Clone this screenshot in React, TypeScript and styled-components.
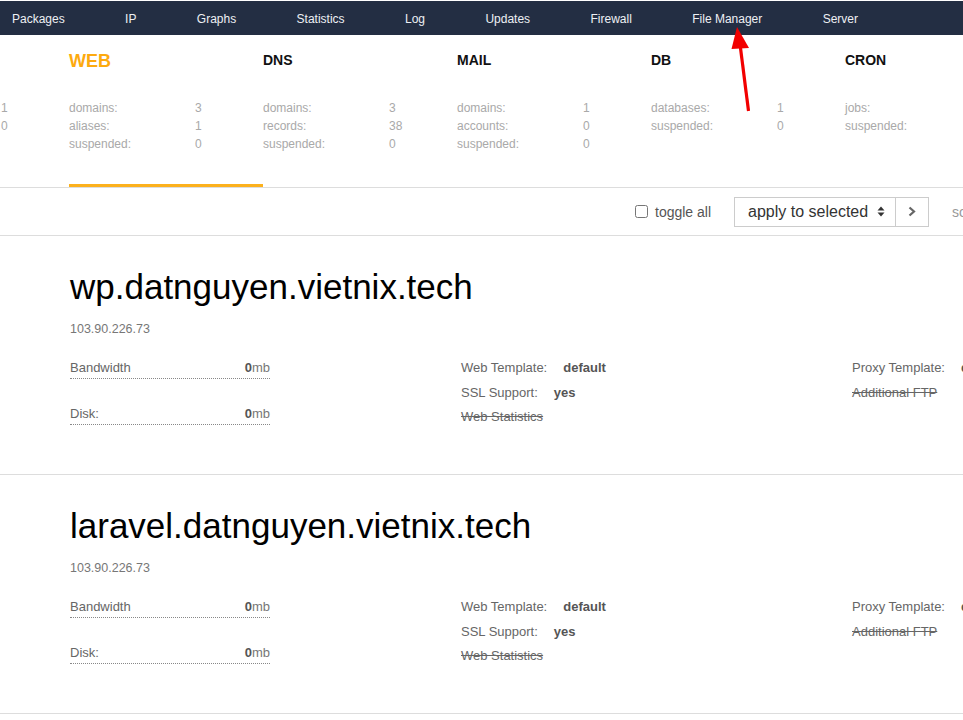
import React from "react";
import styled, { createGlobalStyle } from "styled-components";

const Global = createGlobalStyle`
  html, body { margin: 0; padding: 0; overflow: hidden; background: #fff; }
  body { font-family: "Liberation Sans", Arial, sans-serif; }
`;

const Page = styled.div`
  position: relative;
  width: 963px;
  overflow: hidden;
  padding-top: 1px;
`;

const NavBar = styled.nav`
  display: flex;
  align-items: center;
  gap: 60.4px;
  height: 34px;
  box-sizing: border-box;
  padding: 2px 0 0 12px;
  background: #232e43;
  white-space: nowrap;
`;

const NavItem = styled.span`
  flex: none;
  color: #eef0f4;
  font-size: 12px;
`;

const StatsRow = styled.div`
  display: flex;
  margin-left: -125px;
  border-bottom: 1px solid #dddddd;
  white-space: nowrap;
`;

const Tab = styled.div<{ $active?: boolean }>`
  flex: none;
  width: 194px;
  height: 152px;
  box-sizing: border-box;
  padding-top: 15px;
  border-bottom: 3px solid ${(p) => (p.$active ? "#fcb11d" : "transparent")};
`;

const TabTitle = styled.div<{ $active?: boolean }>`
  height: 22px;
  line-height: ${(p) => (p.$active ? "22px" : "20px")};
  font-weight: bold;
  font-size: ${(p) => (p.$active ? "18px" : "14px")};
  color: ${(p) => (p.$active ? "#fdaa0f" : "#111")};
`;

const StatList = styled.div`
  display: grid;
  grid-template-columns: 126px auto;
  margin-top: 27px;
  font-size: 12px;
  line-height: 18px;
  color: #a9a9a9;
`;

const Toolbar = styled.div`
  display: flex;
  align-items: center;
  height: 47px;
  padding-left: 635px;
  border-bottom: 1px solid #dddddd;
  white-space: nowrap;
  & > * { flex: none; }
`;

const Check = styled.input`
  width: 13px;
  height: 13px;
  margin: 0 7px 0 0;
`;

const ToggleLabel = styled.span`
  font-size: 14px;
  color: #555;
  margin-right: 23px;
`;

const SelectBox = styled.div`
  display: flex;
  align-items: center;
  box-sizing: border-box;
  width: 162px;
  height: 30px;
  padding-left: 13px;
  border: 1px solid #cccccc;
  font-size: 16px;
  color: #333;
  gap: 9px;
`;

const GoButton = styled.div`
  display: flex;
  align-items: center;
  justify-content: center;
  box-sizing: border-box;
  width: 34px;
  height: 30px;
  margin-left: -1px;
  border: 1px solid #cccccc;
  margin-right: 23px;
`;

const SortText = styled.span`
  font-size: 14px;
  color: #999;
`;

const DomainBlock = styled.section`
  box-sizing: border-box;
  height: 239px;
  padding: 31px 0 0 70px;
  border-bottom: 1px solid #dddddd;
  white-space: nowrap;
`;

const DomainTitle = styled.h1`
  margin: 0;
  font-size: 35px;
  line-height: 40px;
  font-weight: normal;
  color: #000;
`;

const Ip = styled.div`
  margin-top: 14px;
  font-size: 12.5px;
  line-height: 16px;
  color: #777;
`;

const Details = styled.div`
  display: grid;
  grid-template-columns: 391px 391px 391px;
  margin-top: 19px;
`;

const UsageCol = styled.div`
  display: flex;
  flex-direction: column;
  gap: 24px;
  padding-top: 1px;
  width: 200px;
`;

const UsageRow = styled.div`
  display: flex;
  justify-content: space-between;
  height: 21px;
  line-height: 21px;
  border-bottom: 1px dotted #888;
  font-size: 13px;
  color: #666;
`;

const UsageValue = styled.span`
  color: #777;
  b { color: #555; }
`;

const InfoCol = styled.div`
  display: flex;
  flex-direction: column;
`;

const InfoRow = styled.div<{ $off?: boolean }>`
  height: 24.5px;
  line-height: 24.5px;
  font-size: 13px;
  color: #666;
  text-decoration: ${(p) => (p.$off ? "line-through" : "none")};
`;

const InfoValue = styled.b`
  margin-left: 16px;
  color: #555;
`;

const ArrowOverlay = styled.svg`
  position: absolute;
  left: 0;
  top: 0;
  pointer-events: none;
`;

const tabs = [
  { title: "USER", stats: [["users:", "1"], ["suspended:", "0"]] },
  { title: "WEB", active: true, stats: [["domains:", "3"], ["aliases:", "1"], ["suspended:", "0"]] },
  { title: "DNS", stats: [["domains:", "3"], ["records:", "38"], ["suspended:", "0"]] },
  { title: "MAIL", stats: [["domains:", "1"], ["accounts:", "0"], ["suspended:", "0"]] },
  { title: "DB", stats: [["databases:", "1"], ["suspended:", "0"]] },
  { title: "CRON", stats: [["jobs:", "0"], ["suspended:", "0"]] },
];

const navItems = ["Packages", "IP", "Graphs", "Statistics", "Log", "Updates", "Firewall", "File Manager", "Server"];

const domains = ["wp.datnguyen.vietnix.tech", "laravel.datnguyen.vietnix.tech"];

function Domain({ name }: { name: string }) {
  return (
    <DomainBlock>
      <DomainTitle>{name}</DomainTitle>
      <Ip>103.90.226.73</Ip>
      <Details>
        <UsageCol>
          <UsageRow>
            <span>Bandwidth</span>
            <UsageValue><b>0</b>mb</UsageValue>
          </UsageRow>
          <UsageRow>
            <span>Disk:</span>
            <UsageValue><b>0</b>mb</UsageValue>
          </UsageRow>
        </UsageCol>
        <InfoCol>
          <InfoRow>Web Template:<InfoValue>default</InfoValue></InfoRow>
          <InfoRow>SSL Support:<InfoValue>yes</InfoValue></InfoRow>
          <InfoRow $off>Web Statistics</InfoRow>
        </InfoCol>
        <InfoCol>
          <InfoRow>Proxy Template:<InfoValue>default</InfoValue></InfoRow>
          <InfoRow $off>Additional FTP</InfoRow>
        </InfoCol>
      </Details>
    </DomainBlock>
  );
}

export default function App() {
  return (
    <Page>
      <Global />
      <NavBar>
        {navItems.map((n) => (
          <NavItem key={n}>{n}</NavItem>
        ))}
      </NavBar>
      <StatsRow>
        {tabs.map((t) => (
          <Tab key={t.title} $active={t.active}>
            <TabTitle $active={t.active}>{t.title}</TabTitle>
            <StatList>
              {t.stats.map(([l, v]) => (
                <React.Fragment key={l}>
                  <span>{l}</span>
                  <span>{v}</span>
                </React.Fragment>
              ))}
            </StatList>
          </Tab>
        ))}
      </StatsRow>
      <Toolbar>
        <Check type="checkbox" />
        <ToggleLabel>toggle all</ToggleLabel>
        <SelectBox>
          <span>apply to selected</span>
          <svg width="8" height="11" viewBox="0 0 8 11">
            <path d="M4 0.5 L7.5 4.5 H0.5 Z M4 10.5 L7.5 6.5 H0.5 Z" fill="#333" />
          </svg>
        </SelectBox>
        <GoButton>
          <svg width="8" height="11" viewBox="0 0 8 11">
            <path d="M1.5 1.5 L6 5.5 L1.5 9.5" stroke="#666" strokeWidth="2.2" fill="none" />
          </svg>
        </GoButton>
        <SortText>sort by</SortText>
      </Toolbar>
      {domains.map((d) => (
        <Domain key={d} name={d} />
      ))}
      <ArrowOverlay width="963" height="720" viewBox="0 0 963 720">
        <line x1="748.5" y1="111" x2="740" y2="44" stroke="#f20000" strokeWidth="3.2" />
        <path d="M737 27 L749 48 L731.5 49 Z" fill="#f20000" />
      </ArrowOverlay>
    </Page>
  );
}
